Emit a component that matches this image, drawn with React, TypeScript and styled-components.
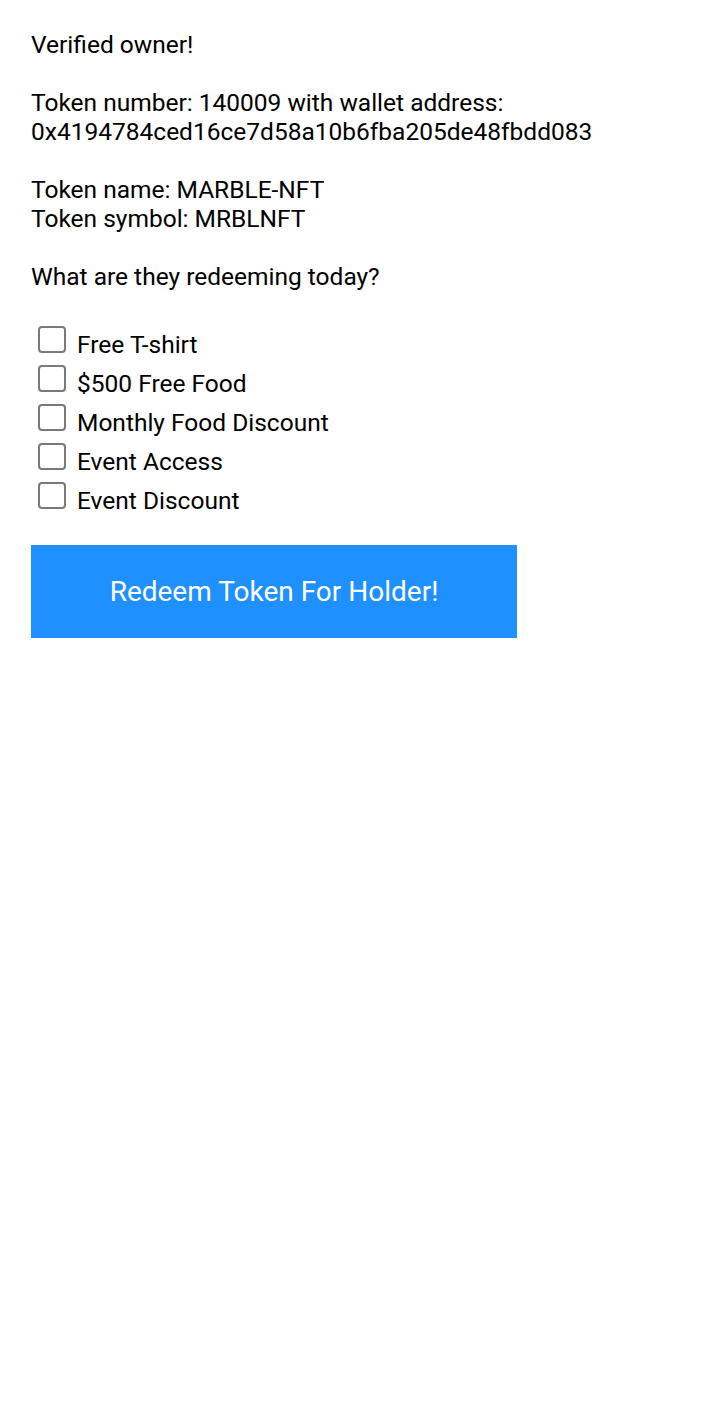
import React from "react";
import styled, { createGlobalStyle } from "styled-components";

const Global = createGlobalStyle`
  html, body { margin: 0; padding: 0; background: #ffffff; }
  body { font-family: Roboto, "Noto Sans", Arial, sans-serif; color: #000; }
`;

const Page = styled.div`
  padding: 30px 31px;
  font-size: 24.5px;
  line-height: 29px;
`;

const Para = styled.p`
  margin: 0 0 29px 0;
`;

const List = styled.div`
  display: flex;
  flex-direction: column;
  gap: 10px;
  margin-top: 39px;
  padding-left: 7px;
`;

const Row = styled.label`
  display: flex;
  align-items: flex-start;
  gap: 11px;
  height: 29px;
`;

const Box = styled.span`
  box-sizing: border-box;
  width: 28px;
  height: 27px;
  border: 2px solid #7a7a7a;
  border-radius: 4px;
  margin-top: -4px;
  flex: none;
`;

const Button = styled.button`
  margin-top: 30px;
  width: 486px;
  height: 93px;
  border: none;
  background: #1e90ff;
  color: #ffffff;
  font-family: Roboto, "Noto Sans", Arial, sans-serif;
  font-size: 28px;
  padding: 0;
  cursor: pointer;
`;

const items = ["Free T-shirt", "$500 Free Food", "Monthly Food Discount", "Event Access", "Event Discount"];

export default function App() {
  return (
    <>
      <Global />
      <Page>
        <Para>Verified owner!</Para>
        <Para>
          Token number: 140009 with wallet address:
          <br />
          0x4194784ced16ce7d58a10b6fba205de48fbdd083
        </Para>
        <Para>
          Token name: MARBLE-NFT
          <br />
          Token symbol: MRBLNFT
        </Para>
        <Para style={{ marginBottom: 0 }}>What are they redeeming today?</Para>
        <List>
          {items.map((t) => (
            <Row key={t}>
              <Box />
              <span>{t}</span>
            </Row>
          ))}
        </List>
        <Button>Redeem Token For Holder!</Button>
      </Page>
    </>
  );
}
